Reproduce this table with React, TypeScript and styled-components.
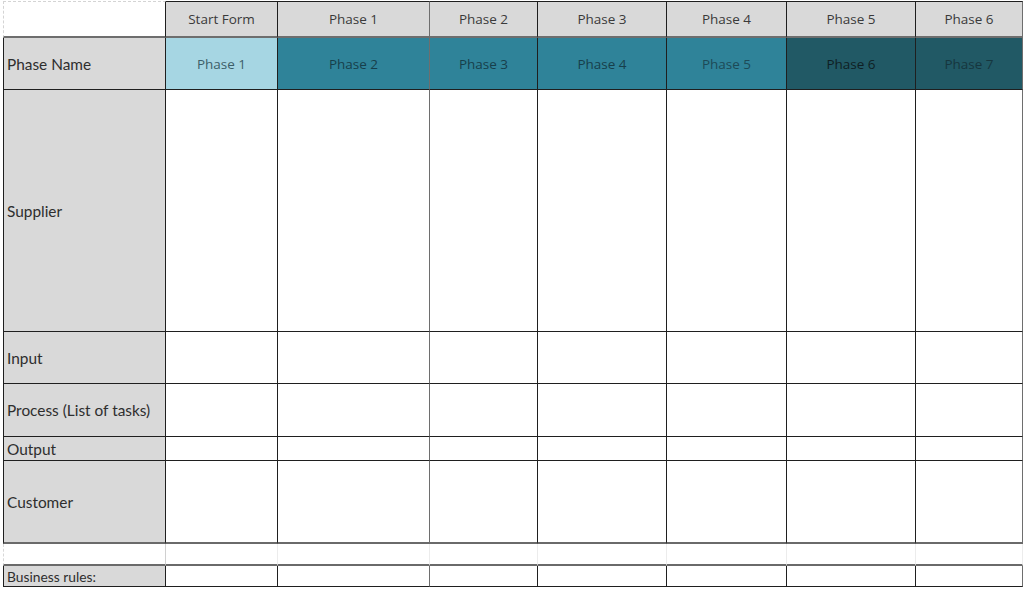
import React from "react";
import styled, { createGlobalStyle } from "styled-components";

const GlobalStyle = createGlobalStyle`
  html, body {
    margin: 0;
    padding: 0;
    background: #fff;
  }
`;

const COLS = [163, 112, 152, 108, 129, 120, 129, 107];

const Sheet = styled.div`
  padding: 1px 0 0 3px;
  width: 1024px;
  height: 591px;
  box-sizing: border-box;
  overflow: hidden;
`;

const Grid = styled.div`
  display: grid;
  grid-template-columns: ${COLS.map((c) => `${c}px`).join(" ")};
  grid-template-rows: 37px 52px 242px 52px 53px 24px 83px 22px 21px;
`;

const Cell = styled.div<{ $bg?: string; $color?: string; $rowLine?: string; $colLine?: string }>`
  box-sizing: border-box;
  display: flex;
  align-items: center;
  justify-content: center;
  background: ${(p) => p.$bg || "#fff"};
  color: ${(p) => p.$color || "#333"};
  border-right: 1px solid ${(p) => p.$colLine || "#1f1f1f"};
  border-bottom: ${(p) => p.$rowLine || "1px solid #1f1f1f"};
  font-family: "Open Sans", "Noto Sans", sans-serif;
  font-size: 13.5px;
`;

const Corner = styled(Cell)`
  border-left: 1px dashed #d4d4d4;
  border-top: 1px dashed #d4d4d4;
  border-right: 1px solid #1f1f1f;
`;

const HeadCell = styled(Cell)`
  background: #d9d9d9;
  border-top: 1px solid #1f1f1f;
  color: #3a3a3a;
`;

const Label = styled(Cell)<{ $small?: boolean }>`
  justify-content: flex-start;
  padding-left: 3px;
  background: #d9d9d9;
  border-left: 1px solid #1f1f1f;
  font-family: "Lato", "Noto Sans", sans-serif;
  font-size: ${(p) => (p.$small ? "13.8px" : "15.4px")};
  color: #2e2e2e;
`;

const Spacer = styled(Cell)<{ $first?: boolean }>`
  border-right: 1px solid ${(p) => (p.$first ? "#d0d0d0" : "#ececec")};
  border-left: ${(p) => (p.$first ? "1px dashed #d8d8d8" : "none")};
  border-bottom: 2px solid #6a6a6a;
`;

const heads = ["Start Form", "Phase 1", "Phase 2", "Phase 3", "Phase 4", "Phase 5", "Phase 6"];

const phases = [
  { name: "Phase 1", bg: "#a6d6e3", color: "#3d5f69" },
  { name: "Phase 2", bg: "#2f8399", color: "#173f4b" },
  { name: "Phase 3", bg: "#2f8399", color: "#173f4b" },
  { name: "Phase 4", bg: "#2f8399", color: "#173f4b" },
  { name: "Phase 5", bg: "#2f8399", color: "#1d4a57" },
  { name: "Phase 6", bg: "#215965", color: "#0f1f24" },
  { name: "Phase 7", bg: "#215965", color: "#16363e" },
];

const bodyRows = [
  { label: "Supplier", line: "1px solid #1f1f1f" },
  { label: "Input", line: "1px solid #1f1f1f" },
  { label: "Process (List of tasks)", line: "1px solid #1f1f1f" },
  { label: "Output", line: "1px solid #1f1f1f" },
  { label: "Customer", line: "2px solid #6a6a6a" },
];

const lineFor = (i: number) => (i === 1 || i === 6 ? "#6e6e6e" : "#1f1f1f");

export default function App() {
  return (
    <>
      <GlobalStyle />
      <Sheet>
        <Grid>
          <Corner $rowLine="2px solid #6e6e6e" />
          {heads.map((h, i) => (
            <HeadCell key={h} $rowLine="2px solid #6e6e6e" $colLine={lineFor(i)}>
              {h}
            </HeadCell>
          ))}

          <Label>Phase Name</Label>
          {phases.map((p, i) => (
            <Cell key={p.name} $bg={p.bg} $color={p.color} $colLine={lineFor(i)}>
              {p.name}
            </Cell>
          ))}

          {bodyRows.map((r) => (
            <React.Fragment key={r.label}>
              <Label $rowLine={r.line}>{r.label}</Label>
              {phases.map((p, i) => (
                <Cell key={p.name} $rowLine={r.line} $colLine={lineFor(i)} />
              ))}
            </React.Fragment>
          ))}

          <Spacer $first />
          {phases.map((p) => (
            <Spacer key={p.name} />
          ))}

          <Label $small>Business rules:</Label>
          {phases.map((p, i) => (
            <Cell key={p.name} $colLine={lineFor(i)} />
          ))}
        </Grid>
      </Sheet>
    </>
  );
}
